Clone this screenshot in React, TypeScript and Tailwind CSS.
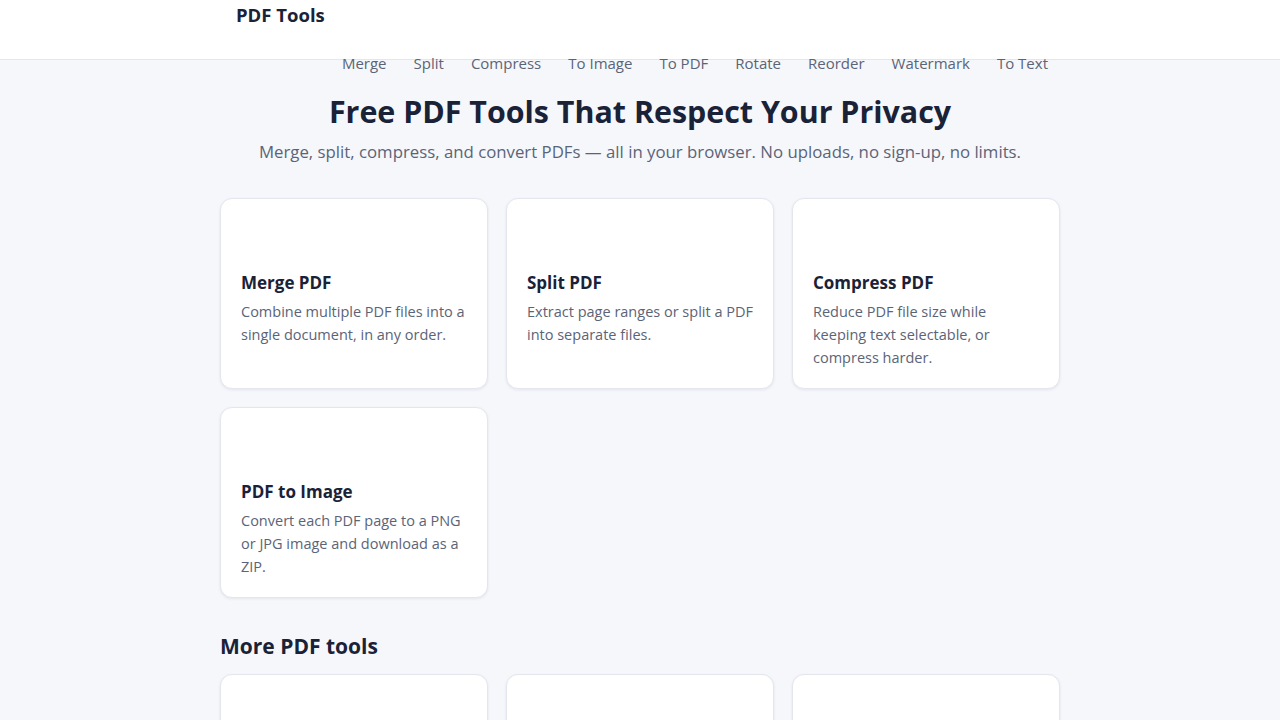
import React from 'react';

const primaryTools = [
    { title: 'Merge PDF', desc: 'Combine multiple PDF files into a single document, in any order.' },
    { title: 'Split PDF', desc: 'Extract page ranges or split a PDF into separate files.' },
    { title: 'Compress PDF', desc: 'Reduce PDF file size while keeping text selectable, or compress harder.' },
    { title: 'PDF to Image', desc: 'Convert each PDF page to a PNG or JPG image and download as a ZIP.' },
];

const moreTools = [
    { title: 'Image to PDF', desc: 'Turn JPG or PNG images into a single PDF document.' },
    { title: 'Rotate PDF', desc: 'Rotate pages of a PDF file by 90, 180 or 270 degrees.' },
    { title: 'Reorder Pages', desc: 'Drag and drop to rearrange pages inside a PDF.' },
];

const navLinks = ['Merge', 'Split', 'Compress', 'To Image', 'To PDF', 'Rotate', 'Reorder', 'Watermark', 'To Text'];

function ToolCard({ title, desc }: { title: string; desc: string }) {
    return (
        <div className="bg-white border border-[#e3e6ee] rounded-xl shadow-[0_1px_3px_rgba(15,23,42,0.08)] px-5 pt-5 pb-[19px]">
            <div className="h-[52px]" />
            <h3 className="text-[17px] font-bold leading-6 text-[#1a2238]">{title}</h3>
            <p className="mt-[5px] text-[14.5px] leading-[23px] text-[#5b6477]">{desc}</p>
        </div>
    );
}

export default function App() {
    return (
        <div className="min-h-screen bg-[#f6f7fb]" style={{ fontFamily: '"Open Sans", "Noto Sans", sans-serif' }}>
            <header className="h-[60px] bg-white border-b border-[#e3e6ee]">
                <div className="w-[840px] mx-auto px-4 flex flex-wrap items-center">
                    <a className="text-[18.5px] font-bold leading-[30px] text-[#1a2238]">PDF Tools</a>
                    <nav className="w-[812px] shrink-0 flex justify-end gap-[27px] mt-[22px]">
                        {navLinks.map((l) => (
                            <a key={l} className="text-[15px] leading-[22px] text-[#5b6477]">{l}</a>
                        ))}
                    </nav>
                </div>
            </header>

            <main className="w-[840px] mx-auto pt-[32px] pb-16">
                <h1 className="text-center text-[30.4px] font-bold leading-10 text-[#1a2238]">Free PDF Tools That Respect Your Privacy</h1>
                <p className="mt-[7px] text-center text-[16.8px] leading-[26px] text-[#5b6477]">
                    Merge, split, compress, and convert PDFs — all in your browser. No uploads, no sign-up, no limits.
                </p>

                <div className="mt-[33px] grid grid-cols-3 gap-[18px]">
                    {primaryTools.map((t) => (
                        <ToolCard key={t.title} {...t} />
                    ))}
                </div>

                <h2 className="mt-[34px] text-[21px] font-bold leading-7 text-[#1a2238]">More PDF tools</h2>
                <div className="mt-[14px] grid grid-cols-3 gap-[18px]">
                    {moreTools.map((t) => (
                        <ToolCard key={t.title} {...t} />
                    ))}
                </div>
            </main>
        </div>
    );
}
